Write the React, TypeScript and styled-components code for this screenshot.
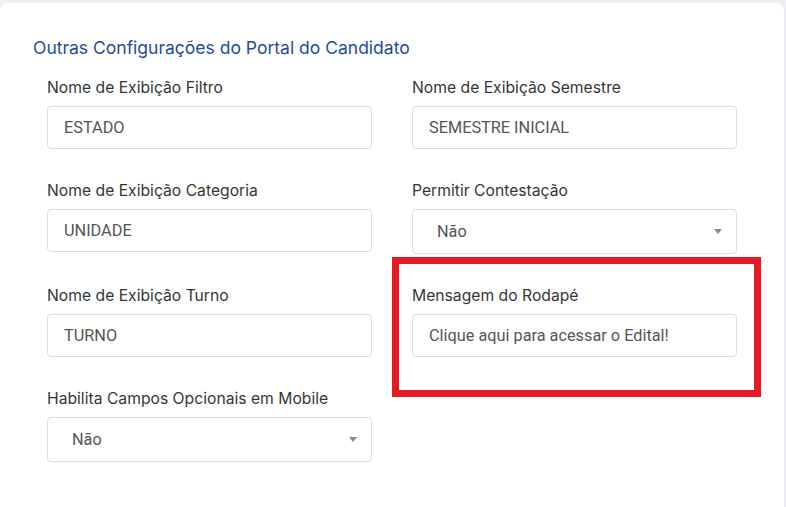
import React from "react";
import styled, { createGlobalStyle } from "styled-components";

const Global = createGlobalStyle`
  html, body { margin: 0; padding: 0; background: #eef0f3; }
  body { font-family: Inter, "Noto Sans", sans-serif; }
  * { box-sizing: border-box; }
`;

const Page = styled.div`
  padding: 3px 2px 0 0;
  min-height: 507px;
  display: flex;
`;

const Card = styled.section`
  flex: 1;
  background: #ffffff;
  border-radius: 8px 8px 0 0;
  box-shadow: 1px 0 0 #e2e4e8;
  padding: 35px 47px 40px 33px;
  min-height: 504px;
`;

const Title = styled.h2`
  margin: 0;
  font-size: 17.5px;
  line-height: 20px;
  font-weight: 400;
  color: #1b4d9b;
`;

const Grid = styled.div`
  margin-top: 19px;
  padding-left: 14px;
  display: grid;
  grid-template-columns: 1fr 1fr;
  column-gap: 40px;
  row-gap: 31px;
  align-items: start;
`;

const Field = styled.div`
  position: relative;
  display: flex;
  flex-direction: column;
`;

const Label = styled.label`
  font-size: 15.7px;
  line-height: 20px;
  padding-top: 1px;
  color: #363636;
  margin-bottom: 8px;
  white-space: nowrap;
`;

const Input = styled.div`
  height: 43px;
  border: 1px solid #dcdcdc;
  border-radius: 4px;
  padding: 0 16px;
  display: flex;
  align-items: center;
  font-family: Roboto, "Liberation Sans", Arial, sans-serif;
  font-size: 16.3px;
  color: #555555;
`;

const Select = styled(Input)`
  height: 45px;
  padding: 0 14px 0 24px;
  justify-content: space-between;
`;

const Caret = styled.span`
  width: 0;
  height: 0;
  border-left: 4px solid transparent;
  border-right: 4px solid transparent;
  border-top: 5px solid #888888;
`;

const Highlight = styled.div`
  position: absolute;
  left: -20px;
  top: -28px;
  right: -24px;
  bottom: -40px;
  border: 7px solid #e51b22;
  pointer-events: none;
`;

type FieldDef = { label: string; value: string; select?: boolean; marked?: boolean };

const fields: FieldDef[] = [
  { label: "Nome de Exibição Filtro", value: "ESTADO" },
  { label: "Nome de Exibição Semestre", value: "SEMESTRE INICIAL" },
  { label: "Nome de Exibição Categoria", value: "UNIDADE" },
  { label: "Permitir Contestação", value: "Não", select: true },
  { label: "Nome de Exibição Turno", value: "TURNO" },
  { label: "Mensagem do Rodapé", value: "Clique aqui para acessar o Edital!", marked: true },
  { label: "Habilita Campos Opcionais em Mobile", value: "Não", select: true },
];

export default function App() {
  return (
    <>
      <Global />
      <Page>
        <Card>
          <Title>Outras Configurações do Portal do Candidato</Title>
          <Grid>
            {fields.map((f) => (
              <Field key={f.label}>
                <Label>{f.label}</Label>
                {f.select ? (
                  <Select>
                    <span>{f.value}</span>
                    <Caret />
                  </Select>
                ) : (
                  <Input>{f.value}</Input>
                )}
                {f.marked && <Highlight />}
              </Field>
            ))}
          </Grid>
        </Card>
      </Page>
    </>
  );
}
